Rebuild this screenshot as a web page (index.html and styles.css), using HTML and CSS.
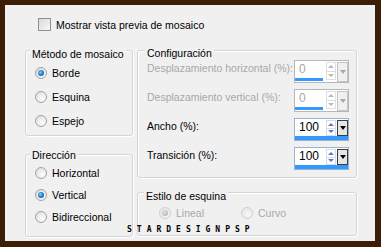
FILE: index.html
```html
<!DOCTYPE html>
<html lang="es">
<head>
    <meta charset="UTF-8">
    <title>Mosaico</title>
    <link rel="stylesheet" href="styles.css">
</head>
<body>
    <div class="panel">
        <label class="check-row">
            <span class="checkbox"></span>
            <span>Mostrar vista previa de mosaico</span>
        </label>

        <div class="columns">
            <div class="col-left">
                <div class="group group-method">
                    <div class="legend">Método de mosaico</div>
                    <div class="radio-row"><span class="radio on"></span>Borde</div>
                    <div class="radio-row"><span class="radio"></span>Esquina</div>
                    <div class="radio-row"><span class="radio"></span>Espejo</div>
                </div>
                <div class="group group-dir">
                    <div class="legend">Dirección</div>
                    <div class="radio-row"><span class="radio"></span>Horizontal</div>
                    <div class="radio-row"><span class="radio on"></span>Vertical</div>
                    <div class="radio-row"><span class="radio"></span>Bidireccional</div>
                </div>
            </div>

            <div class="col-right">
                <div class="group group-config">
                    <div class="legend">Configuración</div>
                    <div class="field-rows">
                        <div class="field-row disabled">
                            <span class="field-label">Desplazamiento horizontal (%):</span>
                            <div class="spin">
                                <div class="spin-top">
                                    <div class="spin-value">0</div>
                                    <div class="spin-arrows"><span class="arr up"></span><span class="arr down"></span></div>
                                    <div class="spin-drop"><span class="tri"></span></div>
                                </div>
                                <div class="spin-bar"></div>
                            </div>
                        </div>
                        <div class="field-row disabled">
                            <span class="field-label">Desplazamiento vertical (%):</span>
                            <div class="spin">
                                <div class="spin-top">
                                    <div class="spin-value">0</div>
                                    <div class="spin-arrows"><span class="arr up"></span><span class="arr down"></span></div>
                                    <div class="spin-drop"><span class="tri"></span></div>
                                </div>
                                <div class="spin-bar"></div>
                            </div>
                        </div>
                        <div class="field-row">
                            <span class="field-label">Ancho (%):</span>
                            <div class="spin">
                                <div class="spin-top">
                                    <div class="spin-value">100</div>
                                    <div class="spin-arrows"><span class="arr up"></span><span class="arr down"></span></div>
                                    <div class="spin-drop"><span class="tri"></span></div>
                                </div>
                                <div class="spin-bar"></div>
                            </div>
                        </div>
                        <div class="field-row">
                            <span class="field-label">Transición (%):</span>
                            <div class="spin">
                                <div class="spin-top">
                                    <div class="spin-value">100</div>
                                    <div class="spin-arrows"><span class="arr up"></span><span class="arr down"></span></div>
                                    <div class="spin-drop"><span class="tri"></span></div>
                                </div>
                                <div class="spin-bar"></div>
                            </div>
                        </div>
                    </div>
                </div>
                <div class="group group-corner">
                    <div class="legend">Estilo de esquina</div>
                    <div class="corner-row">
                        <div class="radio-row disabled"><span class="radio on"></span>Lineal</div>
                        <div class="radio-row disabled"><span class="radio"></span>Curvo</div>
                    </div>
                </div>
            </div>
        </div>

        <div class="watermark">STARDESIGNPSP</div>
    </div>
</body>
</html>
```

FILE: styles.css
```css
body {
    margin: 0;
    background-color: #3c1d08;
    font-family: 'Liberation Sans', Arial, sans-serif;
    font-size: 10.5px;
    color: #000;
    white-space: nowrap;
}
.panel {
    position: relative;
    width: 370px;
    height: 236px;
    margin: 5px 6px 6px 5px;
    padding: 13px 0 0 20px;
    box-sizing: border-box;
    background-color: #f0f0f0;
}

/* checkbox */
.check-row {
    display: flex;
    align-items: center;
    gap: 5px;
    height: 13px;
    margin-left: 13px;
}
.checkbox {
    width: 11px;
    height: 11px;
    border: 1px solid #8e8f8f;
    background: linear-gradient(135deg, #d8d8d8, #f8f8f8);
}

.columns {
    display: flex;
    gap: 4px;
    margin-top: 19px;
}
.col-left {
    width: 108px;
}
.col-right {
    width: 220px;
}

/* group boxes */
.group {
    border: 1px solid #d5d5d5;
    border-radius: 3px;
    box-shadow: inset 1px 1px #fff, 1px 1px #fff;
    box-sizing: border-box;
}
.legend {
    width: fit-content;
    height: 14px;
    line-height: 14px;
    margin: -8px 0 0 -5px;
    padding: 0 2px;
    background-color: #f0f0f0;
}
.group-method {
    height: 86px;
    padding: 4px 0 0 9px;
}
.group-method .radio-row {
    height: 24px;
}
.group-dir {
    height: 83px;
    margin-top: 18px;
    padding: 1px 0 0 9px;
}
.group-dir .radio-row {
    height: 22px;
}

/* radios */
.radio-row {
    display: flex;
    align-items: center;
    gap: 5px;
}
.radio {
    width: 10px;
    height: 10px;
    border: 1px solid #a4a4a4;
    border-radius: 50%;
    background: radial-gradient(circle at 65% 65%, #ffffff, #d6d6d6);
    position: relative;
}
.radio.on::after {
    content: "";
    position: absolute;
    left: 2px;
    top: 2px;
    width: 6px;
    height: 6px;
    border-radius: 50%;
    background: radial-gradient(circle at 40% 40%, #7fd0ff, #0b5fa8 70%, #08396b);
}
.disabled {
    color: #a8a8a8;
}
.disabled .radio {
    border-color: #cfcfcf;
    background: radial-gradient(circle at 65% 65%, #f7f7f7, #e2e2e2);
}
.disabled .radio.on::after {
    background: radial-gradient(circle at 40% 40%, #e0e0e0, #a8a8a8);
}

/* configuration rows */
.group-config {
    height: 128px;
    padding: 3px 7px 0 9px;
}
.group-config .legend {
    margin-left: -2px;
}
.field-rows {
    display: flex;
    flex-direction: column;
    gap: 6px;
}
.field-row {
    display: flex;
    justify-content: space-between;
    align-items: flex-start;
}
.field-label {
    line-height: 16px;
}
.spin {
    width: 55px;
    height: 23px;
    border: 1px solid #98b4cc;
    box-sizing: border-box;
    background-color: #fff;
    display: flex;
    flex-direction: column;
}
.spin-top {
    display: flex;
    height: 18px;
}
.spin-value {
    flex: 1;
    padding-left: 4px;
    line-height: 17px;
    font-size: 12px;
}
.spin-arrows {
    width: 10px;
    margin: 1px 1px 0 0;
    display: flex;
    flex-direction: column;
    border: 1px solid #d6dbe6;
    box-sizing: border-box;
    height: 16px;
}
.arr {
    flex: 1;
    display: flex;
    align-items: center;
    justify-content: center;
}
.arr::before {
    content: "";
    border-left: 3px solid transparent;
    border-right: 3px solid transparent;
}
.arr.up::before {
    border-bottom: 3px solid #5b79c4;
}
.arr.down::before {
    border-top: 3px solid #5b79c4;
}
.arr.up {
    border-bottom: 1px solid #d6dbe6;
}
.spin-drop {
    width: 11px;
    height: 16px;
    margin-top: 1px;
    border: 1px solid #3c3c3c;
    box-sizing: border-box;
    background-color: #e6e6e6;
    display: flex;
    align-items: center;
    justify-content: center;
}
.tri {
    border-left: 3px solid transparent;
    border-right: 3px solid transparent;
    border-top: 4px solid #000;
}
.spin-bar {
    height: 4px;
    background-color: #3399ff;
}

.disabled .spin {
    border-color: #b7b7b7;
}
.disabled .spin-top {
    height: 21px;
}
.disabled .spin-value {
    color: #a8a8a8;
}
.disabled .spin-arrows {
    height: 18px;
    border-color: #e0e0e0;
}
.disabled .arr.up::before {
    border-bottom-color: #b8b8b8;
}
.disabled .arr.down::before {
    border-top-color: #b8b8b8;
}
.disabled .spin-drop {
    height: 20px;
    border-color: #c4c4c4;
    background-color: #f0f0f0;
}
.disabled .tri {
    border-top-color: #a8a8a8;
}
.disabled .spin-bar {
    width: 28px;
    height: 3px;
    margin-top: -4px;
}

/* corner style */
.group-corner {
    height: 44px;
    margin-top: 14px;
    padding: 4px 0 0 21px;
}
.group-corner .legend {
    margin-left: -15px;
}
.corner-row {
    display: flex;
    gap: 37px;
    height: 20px;
}

.watermark {
    position: absolute;
    left: 122px;
    top: 220px;
    font-family: 'DejaVu Sans Mono', monospace;
    font-weight: bold;
    font-size: 8px;
    letter-spacing: 5px;
    color: #000;
}
```
